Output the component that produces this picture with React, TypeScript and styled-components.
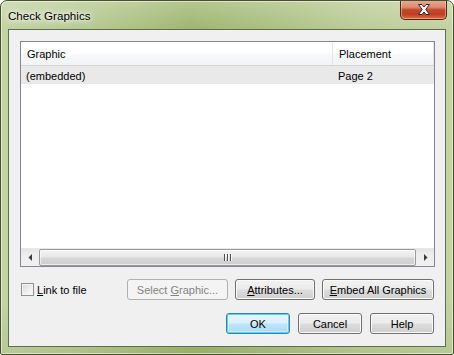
import React from "react";
import styled, { createGlobalStyle, css } from "styled-components";

const Global = createGlobalStyle`
  html, body { margin: 0; padding: 0; background: #ffffff; }
  body { font-family: "Liberation Sans", Arial, sans-serif; font-size: 11px; color: #000; }
  #root { width: 454px; height: 355px; }
`;

const Window = styled.div`
  box-sizing: border-box;
  width: 454px;
  height: 355px;
  display: flex;
  flex-direction: column;
  padding: 0 7px 7px 7px;
  border: 1px solid #46522f;
  border-radius: 7px 7px 2px 2px;
  background:
    linear-gradient(180deg, rgba(255,255,255,0.22) 0px, rgba(255,255,255,0) 28px, rgba(0,0,0,0) 300px, rgba(60,90,10,0.08) 100%),
    linear-gradient(90deg, #c3d3a4 0%, #b6c991 20%, #9fb670 42%, #abc082 60%, #bccd98 80%, #c3d2a1 100%);
  box-shadow: inset 0 0 0 1px rgba(255,255,255,0.5);
  overflow: hidden;
`;

const TitleBar = styled.div`
  height: 28px;
  display: flex;
  align-items: flex-start;
  justify-content: space-between;
  margin: 0 -1px;
`;

const Title = styled.div`
  font-family: "Liberation Sans", Arial, sans-serif;
  font-size: 11.6px;
  color: #000;
  padding: 8px 0 0 1px;
  text-shadow: 0 0 10px rgba(255,255,255,0.95), 0 0 6px rgba(255,255,255,0.9), 0 0 3px rgba(255,255,255,0.8);
`;

const CloseButton = styled.div`
  box-sizing: border-box;
  width: 47px;
  height: 20px;
  margin-top: -1px;
  display: flex;
  align-items: center;
  justify-content: center;
  border: 1px solid #5a2215;
  border-top: none;
  border-radius: 0 0 5px 5px;
  background: linear-gradient(180deg, #e9ab99 0%, #dc8a72 38%, #c4462a 52%, #c13e22 75%, #d8703f 100%);
  box-shadow: inset 0 0 0 1px rgba(255,210,190,0.5);
`;

const Client = styled.div`
  flex: 1;
  display: flex;
  flex-direction: column;
  border: 1px solid #5f6b52;
  background: #f0f0f0;
  padding: 11px 10px 0 11px;
`;

const ListBox = styled.div`
  box-sizing: border-box;
  height: 226px;
  border: 1px solid #828790;
  background: #ffffff;
  display: flex;
  flex-direction: column;
`;

const HeaderRow = styled.div`
  display: flex;
  height: 23px;
  border-bottom: 1px solid #d5d5d5;
  background: linear-gradient(180deg, #ffffff 0%, #ffffff 45%, #f7f8f9 55%, #f3f4f6 100%);
`;

const HeaderCell = styled.div<{ $w?: number }>`
  box-sizing: border-box;
  ${(p) => (p.$w ? css`width: ${p.$w}px;` : css`flex: 1;`)}
  display: flex;
  align-items: center;
  padding-left: 6px;
  border-right: 1px solid #e3e5e8;
`;

const Body = styled.div`
  flex: 1;
`;

const DataRow = styled.div<{ $selected?: boolean }>`
  display: flex;
  height: 18px;
  background: ${(p) => (p.$selected ? "#e9e9e9" : "transparent")};
`;

const DataCell = styled.div<{ $w?: number }>`
  box-sizing: border-box;
  ${(p) => (p.$w ? css`width: ${p.$w}px;` : css`flex: 1;`)}
  display: flex;
  align-items: center;
  padding-left: 5px;
  padding-top: 1px;
`;

const HScroll = styled.div`
  height: 17px;
  display: flex;
  align-items: stretch;
  background: linear-gradient(180deg, #e4e4e4 0%, #eeeeee 30%, #f0f0f0 100%);
  border-top: 1px solid #e8e8e8;
`;

const ArrowBtn = styled.div`
  width: 17px;
  display: flex;
  align-items: center;
  justify-content: center;
`;

const Thumb = styled.div`
  flex: 1;
  margin: 0 1px;
  box-sizing: border-box;
  border: 1px solid #9a9a9a;
  border-radius: 2px;
  background: linear-gradient(180deg, #f4f4f4 0%, #e8e8e8 45%, #d6d6d6 55%, #cfcfcf 100%);
  box-shadow: inset 0 0 0 1px rgba(255,255,255,0.6);
  display: flex;
  align-items: center;
  justify-content: center;
`;

const Grip = styled.div`
  display: flex;
  gap: 1px;
`;

const GripLine = styled.span`
  width: 2px;
  height: 7px;
  background: linear-gradient(90deg, #4f4f4f 0 1px, #f8f8f8 1px 2px);
`;

const Row = styled.div<{ $top: number; $end?: boolean }>`
  display: flex;
  align-items: center;
  margin-top: ${(p) => p.$top}px;
  padding-right: 1px;
  justify-content: ${(p) => (p.$end ? "flex-end" : "space-between")};
`;

const Group = styled.div<{ $gap: number }>`
  display: flex;
  gap: ${(p) => p.$gap}px;
`;

const CheckLabel = styled.label`
  display: flex;
  align-items: center;
  gap: 3px;
  margin-left: 1px;
`;

const CheckBox = styled.span`
  box-sizing: border-box;
  width: 13px;
  height: 13px;
  border: 1px solid #8f8f8f;
  background: linear-gradient(135deg, #d9d9d9 0%, #eeeeee 55%, #fbfbfb 100%);
  box-shadow: inset 0 0 0 1px #f4f4f4;
`;

const Button = styled.div<{ $w: number; $default?: boolean; $disabled?: boolean }>`
  box-sizing: border-box;
  width: ${(p) => p.$w}px;
  height: 21px;
  display: flex;
  align-items: center;
  justify-content: center;
  border: 1px solid #707070;
  border-radius: 3px;
  background: linear-gradient(180deg, #f2f2f2 0%, #ebebeb 48%, #dddddd 52%, #cfcfcf 100%);
  box-shadow: inset 0 0 0 1px #fbfbfb;
  color: #000;
  ${(p) =>
    p.$default &&
    css`
      border-color: #3c7fb1;
      background: linear-gradient(180deg, #eaf6fd 0%, #d9f0fc 48%, #bee6fd 52%, #a7d9f5 100%);
      box-shadow: inset 0 0 0 1px #48d8fb, inset 0 0 0 2px rgba(255,255,255,0.4);
    `}
  ${(p) =>
    p.$disabled &&
    css`
      border-color: #adb2b5;
      background: #f4f4f4;
      box-shadow: none;
      color: #838383;
    `}
`;

const U = styled.span`
  text-decoration: underline;
  text-underline-offset: 1px;
`;

export default function App() {
  return (
    <>
      <Global />
      <Window>
        <TitleBar>
          <Title>Check Graphics</Title>
          <CloseButton>
            <svg width="14" height="11" viewBox="0 0 14 11">
              <path
                d="M1.5 0.5 H5 L7 3 L9 0.5 H12.5 L8.8 5.5 L12.5 10.5 H9 L7 8 L5 10.5 H1.5 L5.2 5.5 Z"
                fill="#ffffff"
                stroke="#3b2a28"
                strokeWidth="1"
                strokeLinejoin="round"
              />
            </svg>
          </CloseButton>
        </TitleBar>
        <Client>
          <ListBox>
            <HeaderRow>
              <HeaderCell $w={312}>Graphic</HeaderCell>
              <HeaderCell>Placement</HeaderCell>
            </HeaderRow>
            <Body>
              <DataRow $selected>
                <DataCell $w={312}>(embedded)</DataCell>
                <DataCell>Page 2</DataCell>
              </DataRow>
            </Body>
            <HScroll>
              <ArrowBtn>
                <svg width="4" height="7" viewBox="0 0 4 7">
                  <path d="M4 0 L0.5 3.5 L4 7 Z" fill="#3c3c3c" />
                </svg>
              </ArrowBtn>
              <Thumb>
                <Grip>
                  <GripLine />
                  <GripLine />
                  <GripLine />
                </Grip>
              </Thumb>
              <ArrowBtn>
                <svg width="4" height="7" viewBox="0 0 4 7">
                  <path d="M0 0 L3.5 3.5 L0 7 Z" fill="#3c3c3c" />
                </svg>
              </ArrowBtn>
            </HScroll>
          </ListBox>
          <Row $top={12}>
            <CheckLabel>
              <CheckBox />
              <span>
                <U>L</U>ink to file
              </span>
            </CheckLabel>
            <Group $gap={7}>
              <Button $w={101} $disabled>
                <span>
                  Select <U>G</U>raphic...
                </span>
              </Button>
              <Button $w={80}>
                <span>
                  <U>A</U>ttributes...
                </span>
              </Button>
              <Button $w={112}>
                <span>
                  <U>E</U>mbed All Graphics
                </span>
              </Button>
            </Group>
          </Row>
          <Row $top={13} $end>
            <Group $gap={8}>
              <Button $w={64} $default>OK</Button>
              <Button $w={64}>Cancel</Button>
              <Button $w={64}>Help</Button>
            </Group>
          </Row>
        </Client>
      </Window>
    </>
  );
}
